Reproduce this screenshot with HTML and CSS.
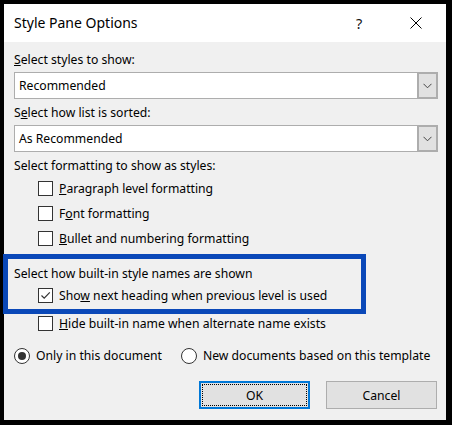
FILE: index.html
```html
<!DOCTYPE html>
<html>
<head>
<meta charset="utf-8">
<link rel="stylesheet" href="styles.css">
</head>
<body>
<div class="dialog">
  <div class="titlebar">
    <span class="title">Style Pane Options</span>
    <span class="help">?</span>
    <svg class="close" width="12" height="12" viewBox="0 0 12 12"><path d="M0.5 0.5 L11.5 11.5 M11.5 0.5 L0.5 11.5" stroke="#000" stroke-width="1" fill="none"/></svg>
  </div>
  <div class="body">
    <div class="label label-first"><u>S</u>elect styles to show:</div>
    <div class="select">
      <span class="select-text">Recommended</span>
      <span class="select-btn"><svg width="9" height="6" viewBox="0 0 9 6"><path d="M0.5 0.8 L4.5 4.8 L8.5 0.8" stroke="#444" stroke-width="1" fill="none"/></svg></span>
    </div>
    <div class="label">S<u>e</u>lect how list is sorted:</div>
    <div class="select">
      <span class="select-text">As Recommended</span>
      <span class="select-btn"><svg width="9" height="6" viewBox="0 0 9 6"><path d="M0.5 0.8 L4.5 4.8 L8.5 0.8" stroke="#444" stroke-width="1" fill="none"/></svg></span>
    </div>
    <div class="label label-gap">Select formatting to show as styles:</div>
    <div class="checks">
      <div class="check-row"><span class="box"></span><span><u>P</u>aragraph level formatting</span></div>
      <div class="check-row"><span class="box"></span><span>F<u>o</u>nt formatting</span></div>
      <div class="check-row"><span class="box"></span><span><u>B</u>ullet and numbering formatting</span></div>
    </div>
    <div class="label label-section">Select how built-in style names are shown</div>
    <div class="check-row check-tight"><span class="box"><svg width="13" height="13" viewBox="0 0 13 13"><path d="M2.5 6.5 L5.2 9.2 L10.8 3.4" stroke="#333" stroke-width="1.2" fill="none"/></svg></span><span>Sho<u>w</u> next heading when previous level is used</span></div>
    <div class="check-row check-hide"><span class="box"></span><span><u>H</u>ide built-in name when alternate name exists</span></div>
    <div class="radios">
      <div class="radio-item"><span class="radio on"><span class="dot"></span></span><span>Only in this document</span></div>
      <div class="radio-item"><span class="radio"></span><span>New documents based on this template</span></div>
    </div>
    <div class="buttons">
      <div class="btn btn-default"><span class="focus">OK</span></div>
      <div class="btn">Cancel</div>
    </div>
  </div>
  <div class="highlight"></div>
</div>
</body>
</html>
```

FILE: styles.css
```css
html, body {
  margin: 0;
  padding: 0;
  background: #000;
}
body {
  width: 452px;
  height: 425px;
  overflow: hidden;
  font-family: "Noto Sans", "Open Sans", sans-serif;
  font-size: 12.2px;
  color: #000;
}
.dialog {
  position: relative;
  margin: 4px 0 0 4px;
  width: 442px;
  height: 416px;
  background: #f0f0f0;
  display: flex;
  flex-direction: column;
}
.titlebar {
  height: 38px;
  background: #fff;
  display: flex;
  align-items: center;
  padding-left: 10px;
  flex-shrink: 0;
}
.title {
  font-size: 14px;
  flex: 1;
  padding-bottom: 1px;
}
.help {
  font-size: 14.5px;
  width: 10px;
  margin-right: 44px;
  padding-bottom: 1px;
  color: #111;
}
.close {
  margin-right: 24px;
  margin-bottom: 1px;
}
.body {
  padding: 9px 8px 0 10px;
  display: flex;
  flex-direction: column;
}
.label {
  line-height: 17px;
  height: 17px;
  margin-top: 5px;
  margin-bottom: 4px;
  white-space: nowrap;
}
.label-first {
  margin-top: 0;
}
.label-gap {
  margin-bottom: 2px;
}
.label-section {
  margin-top: 14px;
  margin-bottom: 1px;
}
.select {
  height: 27px;
  box-sizing: border-box;
  background: #fff;
  border: 1px solid #adadad;
  display: flex;
  align-items: center;
}
.select-text {
  flex: 1;
  padding-left: 4px;
  padding-bottom: 1px;
}
.select-btn {
  width: 21px;
  height: 27px;
  margin: -1px -1px -1px 0;
  box-sizing: border-box;
  background: #e1e1e1;
  border: 2px solid #adadad;
  display: flex;
  align-items: center;
  justify-content: center;
}
.checks {
  display: flex;
  flex-direction: column;
}
.check-row {
  height: 25px;
  display: flex;
  align-items: center;
  padding-left: 24px;
  white-space: nowrap;
}
.check-hide {
  margin-top: 3px;
}
.box {
  width: 15px;
  height: 15px;
  box-sizing: border-box;
  border: 1px solid #333;
  background: #fff;
  margin-right: 6px;
  display: flex;
  align-items: center;
  justify-content: center;
  flex-shrink: 0;
}
.radios {
  height: 25px;
  margin-top: 7px;
  display: flex;
  align-items: center;
  white-space: nowrap;
}
.radio-item {
  display: flex;
  align-items: center;
  margin-right: 19px;
}
.radio {
  width: 16px;
  height: 16px;
  box-sizing: border-box;
  border: 1px solid #333;
  border-radius: 50%;
  background: #fff;
  margin-right: 6px;
  display: flex;
  align-items: center;
  justify-content: center;
}
.dot {
  width: 8px;
  height: 8px;
  border-radius: 50%;
  background: #333;
}
.buttons {
  margin-top: 13px;
  display: flex;
  justify-content: flex-end;
  gap: 16px;
  padding-right: 1px;
}
.btn {
  width: 111px;
  height: 28px;
  box-sizing: border-box;
  background: #e1e1e1;
  border: 1px solid #adadad;
  display: flex;
  align-items: center;
  justify-content: center;
}
.btn-default {
  border: 2px solid #0078d7;
  padding: 1px;
}
.focus {
  flex: 1;
  align-self: stretch;
  border: 1px dotted #000;
  display: flex;
  align-items: center;
  justify-content: center;
}
.highlight {
  position: absolute;
  left: -1px;
  top: 250px;
  width: 363px;
  height: 60px;
  box-sizing: border-box;
  border: 5px solid #0a48b8;
}
```
